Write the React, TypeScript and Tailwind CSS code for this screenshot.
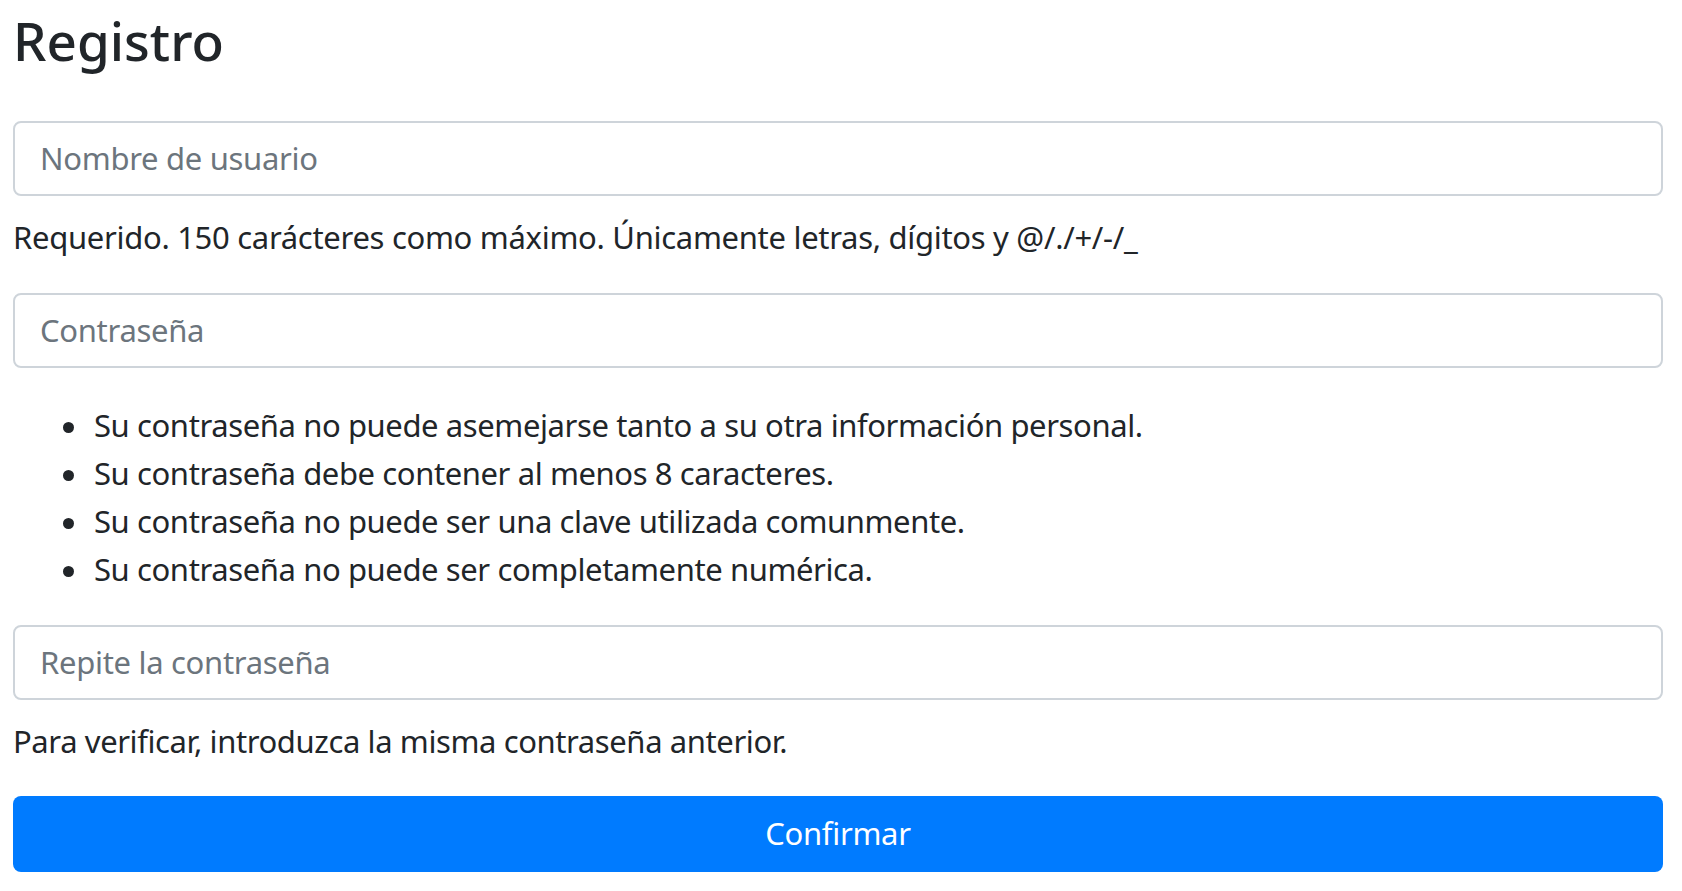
const reglas = [
  "Su contraseña no puede asemejarse tanto a su otra información personal.",
  "Su contraseña debe contener al menos 8 caracteres.",
  "Su contraseña no puede ser una clave utilizada comunmente.",
  "Su contraseña no puede ser completamente numérica.",
];

function Campo({ placeholder, type = "text" }: { placeholder: string; type?: string }) {
  return (
    <input
      type={type}
      placeholder={placeholder}
      className="block h-[75px] w-full rounded-[8px] border-2 border-[#ced4da] bg-white pl-[25px] pr-[25px] text-[31px] tracking-[-0.3px] text-[#495057] outline-none placeholder:text-[#6c757d]"
    />
  );
}

export default function App() {
  return (
    <div
      className="min-h-screen bg-white pl-[13px] pr-[19px] pt-[9px] text-[#212529]"
      style={{ fontFamily: '"Noto Sans", "Open Sans", sans-serif' }}
    >
      <h1 className="text-[53px] font-medium leading-[1.2]">Registro</h1>
      <form className="mt-[48px]" onSubmit={(e) => e.preventDefault()}>
        <Campo placeholder="Nombre de usuario" />
        <p className="mt-[17px] text-[31px] leading-[48px] tracking-[-0.3px]">
          Requerido. 150 carácteres como máximo. Únicamente letras, dígitos y @/./+/-/_
        </p>
        <div className="mt-[32px]">
          <Campo placeholder="Contraseña" type="password" />
        </div>
        <ul className="mt-[33px] text-[31px] leading-[48px] tracking-[-0.4px]">
          {reglas.map((r) => (
            <li key={r} className="flex items-start pl-[50px]">
              <span className="mt-[21px] h-[11px] w-[11px] shrink-0 rounded-full bg-[#212529]" />
              <span className="ml-[20px]">{r}</span>
            </li>
          ))}
        </ul>
        <div className="mt-[32px]">
          <Campo placeholder="Repite la contraseña" type="password" />
        </div>
        <p className="mt-[17px] text-[31px] leading-[48px] tracking-[-0.4px]">
          Para verificar, introduzca la misma contraseña anterior.
        </p>
        <button
          type="submit"
          className="mt-[31px] block h-[76px] w-full rounded-[8px] bg-[#007bff] text-[31px] tracking-[-0.3px] text-white"
        >
          Confirmar
        </button>
      </form>
    </div>
  );
}
